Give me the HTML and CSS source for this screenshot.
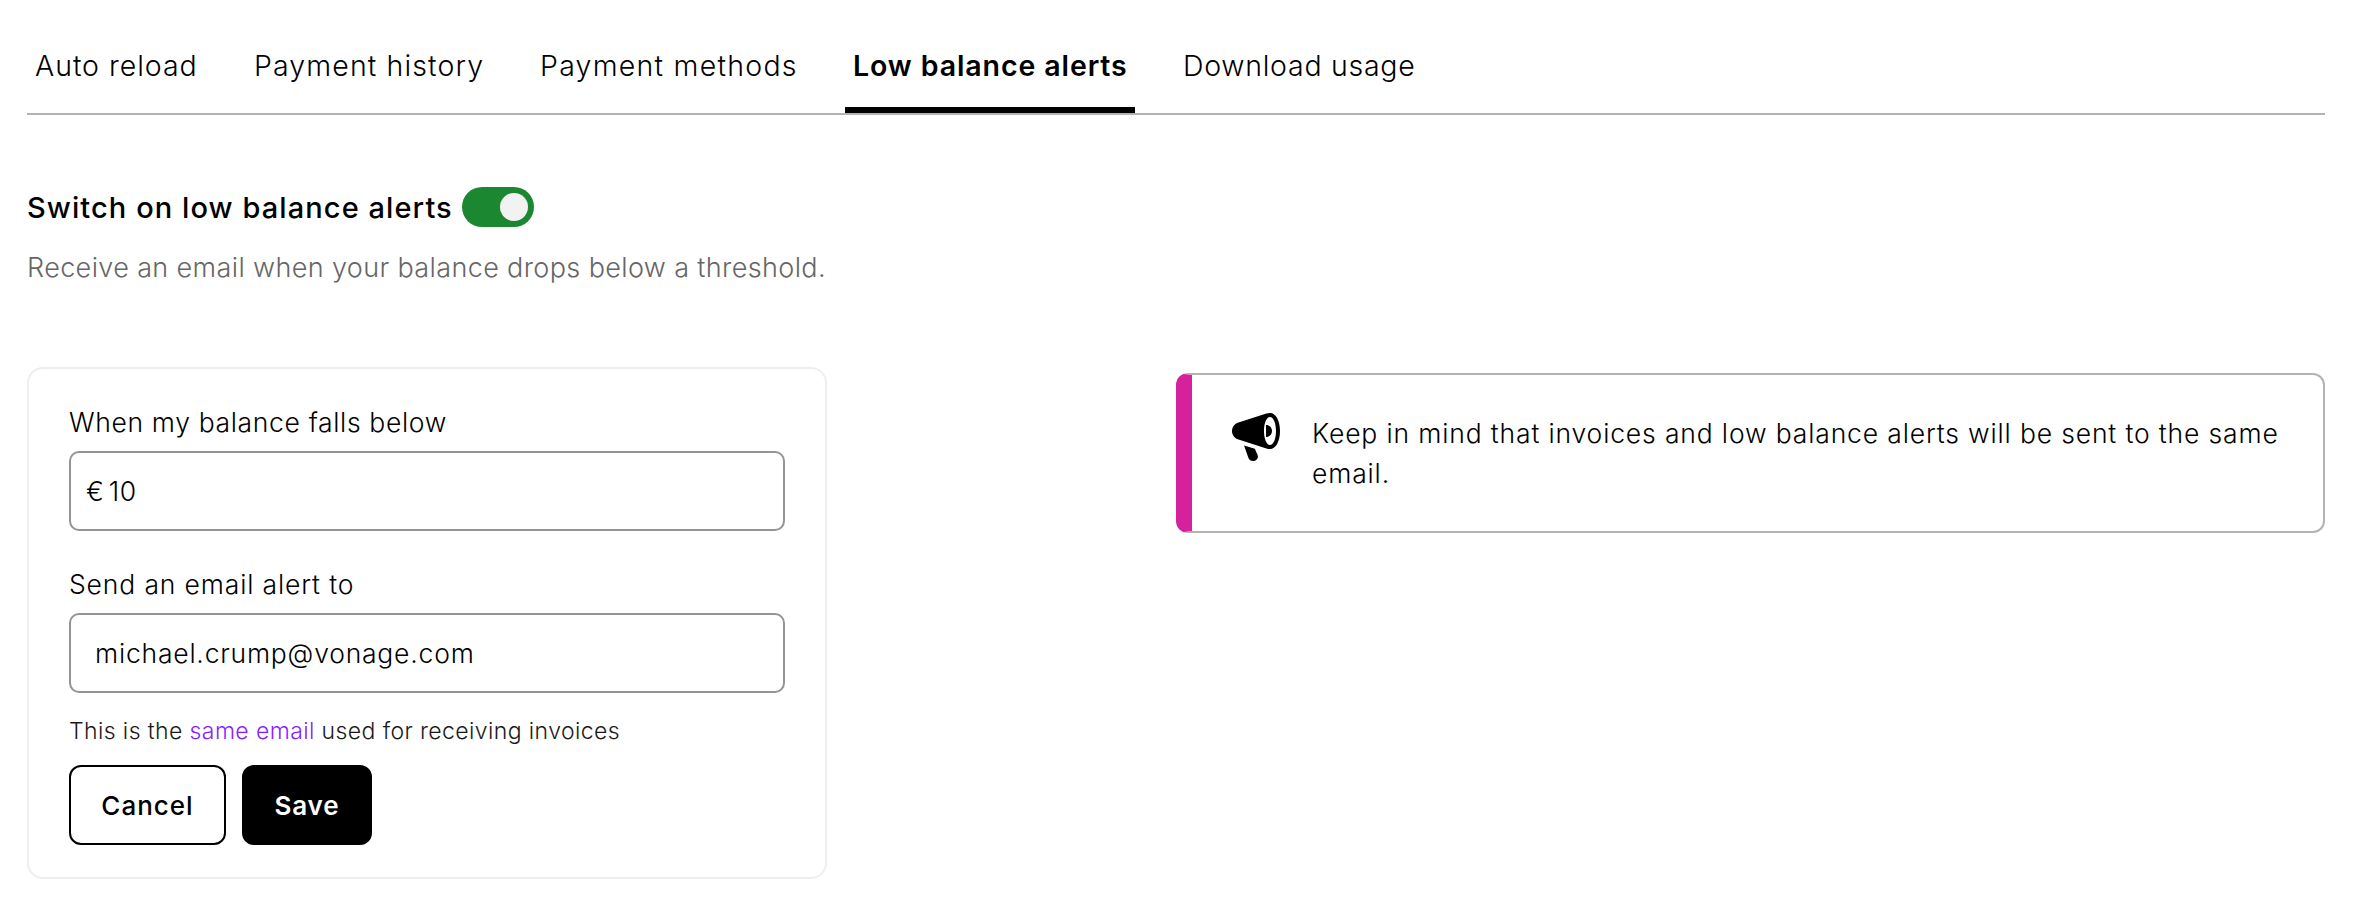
FILE: index.html
```html
<!DOCTYPE html>
<html lang="en">
<head>
<meta charset="utf-8">
<title>Low balance alerts</title>
<link rel="stylesheet" href="styles.css">
</head>
<body>
<nav class="tabs">
  <a class="tab t1"><span>Auto reload</span></a>
  <a class="tab t2"><span>Payment history</span></a>
  <a class="tab t3"><span>Payment methods</span></a>
  <a class="tab t4 active"><span>Low balance alerts</span></a>
  <a class="tab t5"><span>Download usage</span></a>
</nav>
<header class="intro">
  <div class="switch-row"><h1 class="title">Switch on low balance alerts</h1><span class="switch"><span class="knob"></span></span></div>
  <p class="subtitle">Receive an email when your balance drops below a threshold.</p>
</header>
<main class="columns">
  <section class="card">
    <div class="label l1">When my balance falls below</div>
    <div class="field amount"><span class="euro">€</span><span>10</span></div>
    <div class="label l2">Send an email alert to</div>
    <div class="field email"><span>michael.crump@vonage.com</span></div>
    <p class="helper">This is the <a class="link">same email</a> used for receiving invoices</p>
    <div class="actions"><button class="btn cancel">Cancel</button><button class="btn save">Save</button></div>
  </section>
  <aside class="note">
    <svg class="icon" viewBox="0 0 48 48" width="48" height="48"><path fill-rule="evenodd" d="M38 0C44 0 48 8 48 18s-4 18-10 18c-1.200 0-2.400-.2-3.600-.6L6.500 26.600C2.500 25.300 0 22 0 18s2.500-7.300 6.500-8.600L34.400.6C35.600.2 36.800 0 38 0zM38 4c-3.500 0-6 6.300-6 14s2.500 14 6 14 6-6.300 6-14-2.500-14-6-14zM34 12c3.500 0 6 2.600 6 6s-2.500 6-6 6z"/><path d="M12 32.500l10.800 3.200 2.700 6c1.300 3-.8 6.300-4.500 6.300-2.100 0-3.800-1.100-4.600-3.200z"/></svg>
    <p class="note-text">Keep in mind that invoices and low balance alerts will be sent to the same email.</p>
  </aside>
</main>
</body>
</html>
```
FILE: styles.css
```css
* { box-sizing: border-box; margin: 0; }
body { padding: 28px 38px 0 27px; background: #fff; color: #000; font-family: Inter, "Liberation Sans", sans-serif; font-weight: 300; }
.tabs { display: flex; gap: 40px; height: 87px; border-bottom: 2px solid #b3b3b3; white-space: nowrap; font-size: 28.5px; line-height: 76px; }
.tab { height: 85px; padding: 0 8px; }
.tab.active { font-weight: 600; border-bottom: 6px solid #000; }
.t1 { width: 179px; letter-spacing: .96px; }
.t2 { width: 246px; letter-spacing: 1.12px; }
.t3 { width: 273px; letter-spacing: 1.25px; }
.t4 { width: 290px; letter-spacing: .9px; }
.t5 { letter-spacing: .72px; }
.intro { padding-top: 72px; white-space: nowrap; }
.switch-row { display: flex; align-items: center; height: 40px; }
.title { width: 435px; font-size: 29px; font-weight: 450; line-height: 41px; letter-spacing: 1.08px; }
.switch { width: 72px; height: 40px; padding: 6px; border-radius: 20px; background: #1c8731; display: flex; justify-content: flex-end; }
.knob { width: 28px; height: 28px; border-radius: 50%; background: #f2f2f2; }
.subtitle { margin-top: 20px; font-size: 27px; line-height: 41px; letter-spacing: .37px; color: #666; }
.columns { display: flex; align-items: flex-start; justify-content: space-between; margin-top: 79px; }
.card { width: 800px; height: 512px; padding: 34px 40px; border: 2px solid #eee; border-radius: 16px; white-space: nowrap; }
.label { height: 40px; font-size: 26.5px; line-height: 39px; }
.l1 { letter-spacing: .65px; }
.l2 { letter-spacing: .86px; }
.field { display: flex; align-items: center; height: 80px; width: 716px; margin-top: 8px; border: 2px solid #949494; border-radius: 10px; font-size: 26.5px; letter-spacing: .79px; }
.amount { padding-left: 15px; gap: 4px; margin-bottom: 34px; }
.email { padding-left: 24px; }
.helper { margin-top: 18px; font-size: 23px; line-height: 40px; height: 40px; letter-spacing: .4px; color: #1a1a1a; }
.link { color: #871eff; }
.actions { display: flex; gap: 16px; margin-top: 14px; }
.btn { height: 80px; padding: 2px 0 0; font: 600 26px/38px Inter, "Liberation Sans", sans-serif; letter-spacing: .9px; border: 2px solid #000; border-radius: 12px; background: #fff; color: #000; }
.cancel { width: 157px; font-weight: 550; letter-spacing: 1px; }
.save { width: 130px; background: #000; color: #fff; }
.note { display: flex; width: 1149px; height: 160px; margin-top: 6px; padding: 38px 28px 0 40px; border: 2px solid #b3b3b3; border-left: 16px solid #d6219c; border-radius: 12px; }
.icon { flex: none; margin-right: 32px; }
.note-text { font-size: 26.500px; line-height: 40px; letter-spacing: .85px; }
```
